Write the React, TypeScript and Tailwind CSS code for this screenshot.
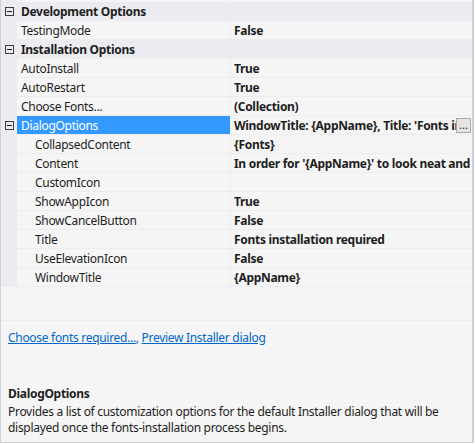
const LINE = '#ebebf0'

type Row =
  | { kind: 'cat'; label: string }
  | { kind: 'prop'; name: string; value?: string; sub?: boolean; expander?: boolean; selected?: boolean; button?: boolean }

const ROWS: Row[] = [
  { kind: 'cat', label: 'Development Options' },
  { kind: 'prop', name: 'TestingMode', value: 'False' },
  { kind: 'cat', label: 'Installation Options' },
  { kind: 'prop', name: 'AutoInstall', value: 'True' },
  { kind: 'prop', name: 'AutoRestart', value: 'True' },
  { kind: 'prop', name: 'Choose Fonts...', value: '(Collection)' },
  {
    kind: 'prop',
    name: 'DialogOptions',
    value: "WindowTitle: {AppName}, Title: 'Fonts installation required', Content: ...",
    expander: true,
    selected: true,
    button: true,
  },
  { kind: 'prop', name: 'CollapsedContent', value: '{Fonts}', sub: true },
  {
    kind: 'prop',
    name: 'Content',
    value: "In order for '{AppName}' to look neat and work properly, the following fonts need to be installed.",
    sub: true,
  },
  { kind: 'prop', name: 'CustomIcon', value: '', sub: true },
  { kind: 'prop', name: 'ShowAppIcon', value: 'True', sub: true },
  { kind: 'prop', name: 'ShowCancelButton', value: 'False', sub: true },
  { kind: 'prop', name: 'Title', value: 'Fonts installation required', sub: true },
  { kind: 'prop', name: 'UseElevationIcon', value: 'False', sub: true },
  { kind: 'prop', name: 'WindowTitle', value: '{AppName}', sub: true },
]

function Expander() {
  return (
    <svg width="9" height="9" viewBox="0 0 9 9" className="absolute left-[4px] top-[5px]" aria-hidden="true">
      <rect x="0.5" y="0.5" width="8" height="8" fill="none" stroke="#3c3c3c" strokeWidth="1" />
      <path d="M2 4.5h5" stroke="#1e1e1e" strokeWidth="1" />
    </svg>
  )
}

export default function App() {
  return (
    <div
      className="w-[474px] h-[443px] bg-[#f5f5f5] border-l border-r-2 border-b border-[#cfcfdc] flex flex-col text-[12px] tracking-[-0.3px] text-[#1e1e1e]"
      style={{ fontFamily: '"Noto Sans", "Open Sans", sans-serif' }}
    >
      {/* property grid */}
      <div className="flex flex-col">
        {/* tail of the row scrolled above */}
        <div className="flex h-[2px]">
          <div className="w-[16px] shrink-0" style={{ background: LINE }} />
          <div className="w-[214px] shrink-0 border-r border-[#ebebf0]" />
          <div className="flex-1" />
        </div>

        {ROWS.map((r, i) =>
          r.kind === 'cat' ? (
            <div key={i} className="relative h-[19px] flex items-center pt-[1px] bg-[#ebebf0]">
              <Expander />
              <span className="pl-[20px] font-bold leading-none">{r.label}</span>
            </div>
          ) : (
            <div key={i} className="relative flex h-[19px] border-b border-[#ebebf0]">
              <div className="w-[16px] shrink-0 bg-[#ebebf0]" />
              {r.expander && <Expander />}
              <div
                className={`w-[214px] shrink-0 flex items-center pt-[1px] border-r border-[#ebebf0] ${
                  r.selected ? 'bg-[#3399ff] text-white' : ''
                } ${r.sub ? 'pl-[18px]' : 'pl-[4px]'}`}
              >
                <span className="whitespace-nowrap leading-none">{r.name}</span>
              </div>
              <div className="flex-1 min-w-0 flex items-center pt-[1px] pl-[3px]">
                <div className={`min-w-0 overflow-hidden ${r.button ? 'w-[222px]' : 'flex-1'}`}>
                  <span className="whitespace-nowrap font-bold leading-none">{r.value}</span>
                </div>
                {r.button && (
                  <div className="ml-auto mr-[1px] mt-[-1px] w-[15px] h-[15px] shrink-0 bg-[#e4e4e4] border border-[#a8a8a8] flex items-end justify-center text-[11px] tracking-normal leading-[11px] pb-[2px]">
                    ...
                  </div>
                )}
              </div>
            </div>
          ),
        )}
      </div>

      <div className="h-[33px]" />

      {/* commands */}
      <div className="border-t border-[#ebebf0] pt-[9px] pl-[7px] leading-[16px]">
        <a href="#" className="text-[#0066cc] underline">
          Choose fonts required...
        </a>
        <span className="text-[#0066cc]">, </span>
        <a href="#" className="text-[#0066cc] underline">
          Preview Installer dialog
        </a>
      </div>

      {/* description */}
      <div className="mt-auto pl-[7px] pb-[6px] leading-[16px]">
        <div className="font-bold mb-[2px]">DialogOptions</div>
        <div>
          Provides a list of customization options for the default Installer dialog that will be displayed once the
          fonts-installation process begins.
        </div>
      </div>
    </div>
  )
}
